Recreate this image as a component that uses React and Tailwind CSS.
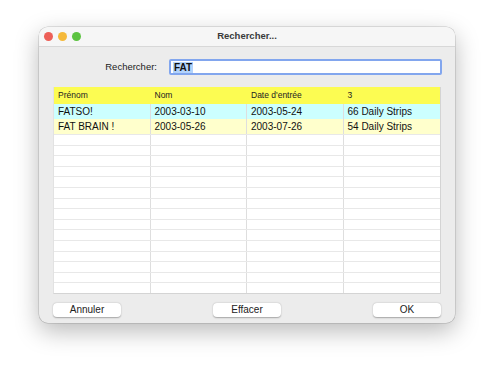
const columns = ['Prénom', 'Nom', "Date d'entrée", '3'];

const rows = [
  { cells: ['FATSO!', '2003-03-10', '2003-05-24', '66 Daily Strips'], bg: 'bg-[#ccffff]' },
  { cells: ['FAT BRAIN !', '2003-05-26', '2003-07-26', '54 Daily Strips'], bg: 'bg-[#ffffcc]' },
];

const EMPTY_ROWS = 15;

function Button({ children }) {
  return (
    <button className="w-[68px] h-[14px] bg-white rounded-[4px] shadow-[0_0.5px_1.5px_rgba(0,0,0,0.3)] text-[10px] leading-none text-[#222]">
      {children}
    </button>
  );
}

export default function App() {
  return (
    <div
      className="w-[493px] h-[375px] bg-white overflow-hidden pt-[27px] pl-[39px]"
      style={{ fontFamily: '"Liberation Sans", Arial, sans-serif' }}
    >
      <div className="w-[416px] h-[296px] rounded-[9px] overflow-hidden flex flex-col bg-[#ececec] shadow-[0_8px_24px_rgba(0,0,0,0.28),0_0_0_0.5px_rgba(0,0,0,0.2)]">
        {/* Title bar */}
        <div className="h-[20px] shrink-0 bg-[#f6f6f6] border-b border-[#d8d8d8] relative flex items-center justify-center">
          <div className="absolute left-[5px] top-[5px] flex gap-[5px]">
            <span className="w-[9px] h-[9px] rounded-full bg-[#ed5f57]" />
            <span className="w-[9px] h-[9px] rounded-full bg-[#f5b93a]" />
            <span className="w-[9px] h-[9px] rounded-full bg-[#5cc341]" />
          </div>
          <span className="text-[9.5px] font-bold text-[#3a3a3a]">Rechercher...</span>
        </div>

        {/* Body */}
        <div className="flex-1 flex flex-col px-[14px] pt-[12px] pb-[6px]">
          <div className="flex items-center h-[16px]">
            <span className="w-[104px] text-right text-[9.5px] text-[#222]">Rechercher:</span>
            <div className="ml-[12px] flex-1 h-[16px] mr-[-1px] bg-white rounded-[2px] border-[2px] border-[#82a6ee] flex items-center pl-[2px]">
              <span className="bg-[#b3d3fb] text-[10px] font-bold leading-[11px] text-[#111] px-[1px]">FAT</span>
            </div>
          </div>

          {/* Table */}
          <div className="mt-[12px] h-[207px] flex flex-col bg-white border-r border-b border-[#d4d4d4] border-l border-l-[#e2e2e2]">
            <div className="h-[17px] shrink-0 grid grid-cols-4 bg-[#fcfc52]">
              {columns.map((c) => (
                <div key={c} className="flex items-center pl-[4px] text-[8.5px] text-[#222]">
                  {c}
                </div>
              ))}
            </div>
            <div className="flex-1 flex flex-col">
              {rows.map((r, i) => (
                <div key={i} className={`flex-1 grid grid-cols-4 ${r.bg}`}>
                  {r.cells.map((c, j) => (
                    <div
                      key={j}
                      className="flex items-center pl-[4px] text-[10px] text-[#111] border-r border-[#dedede] last:border-r-0"
                    >
                      {c}
                    </div>
                  ))}
                </div>
              ))}
              {Array.from({ length: EMPTY_ROWS }).map((_, i) => (
                <div key={i} className="flex-1 grid grid-cols-4 border-t border-[#e8e8e8]">
                  {columns.map((c) => (
                    <div key={c} className="border-r border-[#dedede] last:border-r-0" />
                  ))}
                </div>
              ))}
            </div>
          </div>

          {/* Buttons */}
          <div className="mt-[9px] flex justify-between">
            <Button>Annuler</Button>
            <Button>Effacer</Button>
            <Button>OK</Button>
          </div>
        </div>
      </div>
    </div>
  );
}
